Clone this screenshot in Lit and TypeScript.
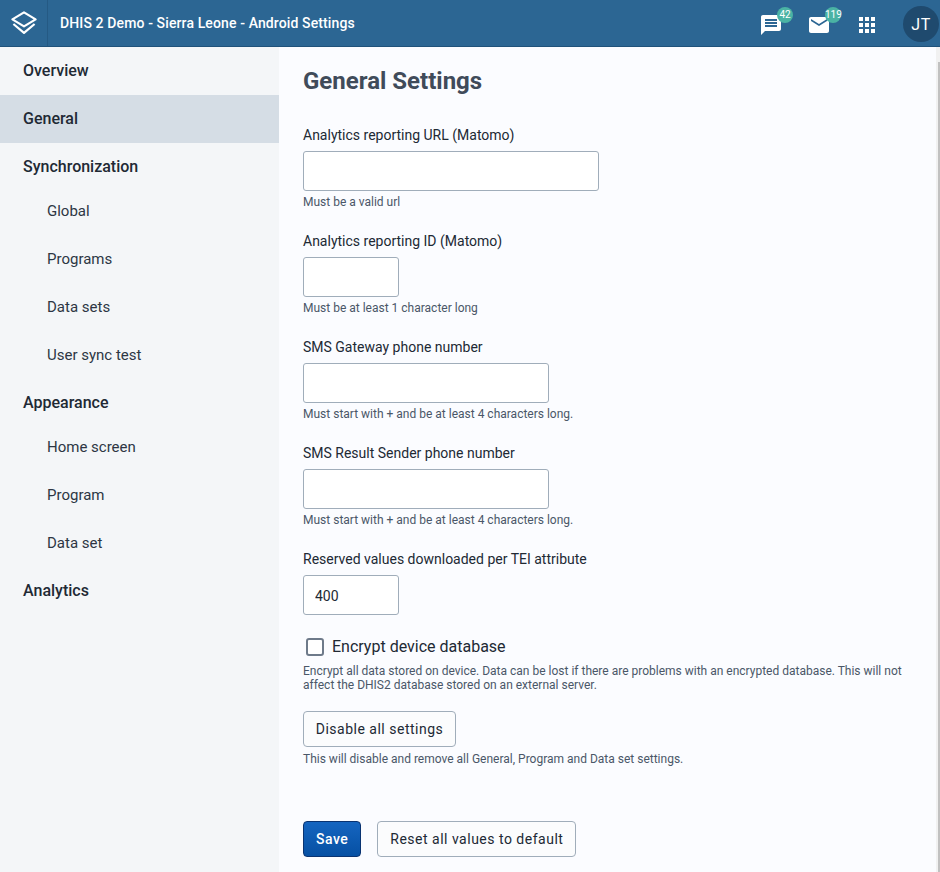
import { LitElement, html, css, nothing } from "lit";
import { customElement } from "lit/decorators.js";

const NAV = [
  { label: "Overview" },
  { label: "General", active: true },
  { label: "Synchronization", children: ["Global", "Programs", "Data sets", "User sync test"] },
  { label: "Appearance", children: ["Home screen", "Program", "Data set"] },
  { label: "Analytics" },
];

const FIELDS = [
  { label: "Analytics reporting URL (Matomo)", size: "wide", help: "Must be a valid url", value: "" },
  { label: "Analytics reporting ID (Matomo)", size: "small", help: "Must be at least 1 character long", value: "" },
  { label: "SMS Gateway phone number", size: "mid", help: "Must start with + and be at least 4 characters long.", value: "" },
  { label: "SMS Result Sender phone number", size: "mid", help: "Must start with + and be at least 4 characters long.", value: "" },
  { label: "Reserved values downloaded per TEI attribute", size: "small", help: "", value: "400" },
];

@customElement("app-root")
export class AppRoot extends LitElement {
  static styles = css`
    :host {
      display: flex;
      flex-direction: column;
      height: 100vh;
      overflow: hidden;
      font-family: Roboto, sans-serif;
      color: #212934;
    }

    /* Header */
    .topbar {
      display: flex;
      align-items: center;
      flex: none;
      box-sizing: border-box;
      height: 47px;
      background: #2c6693;
      border-bottom: 1px solid #20527a;
      color: #fff;
    }
    .logo {
      display: flex;
      align-items: center;
      justify-content: center;
      width: 47px;
      height: 100%;
      border-right: 1px solid #255a84;
    }
    .title {
      flex: 1;
      padding-left: 12px;
      font-size: 14px;
      font-weight: 500;
      letter-spacing: 0.12px;
    }
    .icons {
      display: flex;
      align-items: center;
      height: 100%;
    }
    .icon {
      position: relative;
      display: flex;
      width: 24px;
      height: 24px;
      margin: 4px 24px 0 0;
    }
    .badge {
      position: absolute;
      top: -6px;
      left: 18px;
      width: 16px;
      height: 16px;
      border-radius: 50%;
      background: #4ab3a4;
      color: #fff;
      font-size: 10px;
      line-height: 16px;
      text-align: center;
    }
    .avatar {
      display: flex;
      align-items: center;
      justify-content: center;
      width: 36px;
      height: 36px;
      margin: 2px 1px 0 0;
      border-radius: 50%;
      background: #1f4a6e;
      font-size: 16px;
      letter-spacing: 0.6px;
    }

    /* Body */
    .body {
      display: flex;
      flex: 1;
      min-height: 0;
    }
    nav {
      flex: none;
      width: 279px;
      background: #f4f6f8;
    }
    .nav-item {
      box-sizing: border-box;
      display: flex;
      align-items: center;
      height: 48px;
      padding: 0 0 2px 23px;
      font-size: 16px;
      font-weight: 500;
    }
    .nav-item.active {
      background: #d5dde5;
    }
    .children {
      margin: -3px 0 -1px;
    }
    .nav-item.sub {
      padding-left: 47px;
      font-size: 15px;
      font-weight: 400;
      color: #2d3644;
    }

    main {
      flex: 1;
      padding: 0 24px;
      background: #fbfcff;
    }
    h1 {
      margin: 0;
      padding: 22px 0 32px;
      font-size: 24px;
      line-height: 24px;
      font-weight: 700;
      color: #404b5a;
    }
    .field {
      margin-bottom: 22px;
    }
    .field label {
      display: block;
      height: 26px;
      font-size: 14px;
      line-height: 20px;
    }
    input[type="text"] {
      display: block;
      box-sizing: border-box;
      height: 40px;
      padding: 1px 11px 0;
      border: 1px solid #a0adba;
      border-radius: 3px;
      background: #fff;
      font: 14px Roboto, sans-serif;
      color: #212934;
      outline: none;
    }
    .wide {
      width: 296px;
    }
    .mid {
      width: 246px;
    }
    .small {
      width: 96px;
    }
    .help {
      font-size: 12px;
      line-height: 14px;
      color: #4a5768;
    }
    .field .help {
      margin-top: 4px;
    }

    .check {
      display: flex;
      align-items: center;
      gap: 8px;
      margin-top: -2px;
      padding: 1px 0 0 3px;
      height: 21px;
      font-size: 16px;
    }
    .box {
      box-sizing: border-box;
      width: 18px;
      height: 18px;
      border: 2px solid #6e7a8a;
      border-radius: 3px;
      background: #fff;
    }
    .check-help {
      margin-top: 7px;
      max-width: 610px;
    }

    button {
      box-sizing: border-box;
      height: 36px;
      padding: 0 12px;
      border: 1px solid #a0adba;
      border-radius: 4px;
      background: #fbfcfd;
      font: 14px Roboto, sans-serif;
      letter-spacing: 0.5px;
      color: #212934;
    }
    .disable {
      display: block;
      width: 153px;
      margin-top: 19px;
      padding: 0;
    }
    .disable-help {
      margin-top: 5px;
    }
    .actions {
      display: flex;
      gap: 16px;
      margin-top: 55px;
    }
    .primary {
      border-color: #093371;
      background: linear-gradient(180deg, #1565c0, #0650a3);
      color: #fff;
      font-weight: 500;
    }

    .scrollbar {
      flex: none;
      display: flex;
      justify-content: flex-end;
      width: 4px;
      padding-top: 15px;
      box-sizing: border-box;
      background: #f1f1f1;
    }
    .scrollbar div {
      width: 2px;
      background: #c1c1c1;
    }
  `;

  render() {
    return html`
      <header class="topbar">
        <div class="logo">
          <svg width="28" height="24" viewBox="0 0 28 24" fill="none" stroke="#fff" stroke-width="2.2">
            <path d="M14 1.4 L25.6 8.4 L14 15.4 L2.4 8.4 Z" stroke-linejoin="round" />
            <path d="M3.4 13 L14 21.8 L24.6 13" stroke-linejoin="round" />
          </svg>
        </div>
        <div class="title">DHIS 2 Demo - Sierra Leone - Android Settings</div>
        <div class="icons">
          <span class="icon">
            <svg width="24" height="24" viewBox="0 0 24 24" fill="#fff">
              <path d="M20 2H4c-1.1 0-1.99.9-1.99 2L2 22l4-4h14c1.1 0 2-.9 2-2V4c0-1.1-.9-2-2-2zm-2 12H6v-2h12v2zm0-3H6V9h12v2zm0-3H6V6h12v2z" />
            </svg>
            <span class="badge">42</span>
          </span>
          <span class="icon">
            <svg width="24" height="24" viewBox="0 0 24 24" fill="#fff">
              <path d="M20 4H4c-1.1 0-1.99.9-1.99 2L2 18c0 1.1.9 2 2 2h16c1.1 0 2-.9 2-2V6c0-1.1-.9-2-2-2zm0 4l-8 5-8-5V6l8 5 8-5v2z" />
            </svg>
            <span class="badge">119</span>
          </span>
          <span class="icon">
            <svg width="24" height="24" viewBox="0 0 24 24" fill="#fff">
              <path d="M4 8h4V4H4v4zm6 12h4v-4h-4v4zm-6 0h4v-4H4v4zm0-6h4v-4H4v4zm6 0h4v-4h-4v4zm6-10v4h4V4h-4zm-6 4h4V4h-4v4zm6 6h4v-4h-4v4zm0 6h4v-4h-4v4z" />
            </svg>
          </span>
          <span class="avatar">JT</span>
        </div>
      </header>
      <div class="body">
        <nav>
          ${NAV.map(
            (n) => html`
              <div class="nav-item ${n.active ? "active" : ""}">${n.label}</div>
              ${n.children
                ? html`<div class="children">
                    ${n.children.map((c) => html`<div class="nav-item sub">${c}</div>`)}
                  </div>`
                : nothing}
            `
          )}
        </nav>
        <main>
          <h1>General Settings</h1>
          ${FIELDS.map(
            (f) => html`
              <div class="field">
                <label>${f.label}</label>
                <input type="text" class=${f.size} .value=${f.value} />
                ${f.help ? html`<div class="help">${f.help}</div>` : nothing}
              </div>
            `
          )}
          <div class="check"><span class="box"></span>Encrypt device database</div>
          <div class="help check-help">
            Encrypt all data stored on device. Data can be lost if there are problems with an encrypted database. This
            will not affect the DHIS2 database stored on an external server.
          </div>
          <button class="disable">Disable all settings</button>
          <div class="help disable-help">This will disable and remove all General, Program and Data set settings.</div>
          <div class="actions">
            <button class="primary">Save</button>
            <button>Reset all values to default</button>
          </div>
        </main>
        <div class="scrollbar"><div></div></div>
      </div>
    `;
  }
}
